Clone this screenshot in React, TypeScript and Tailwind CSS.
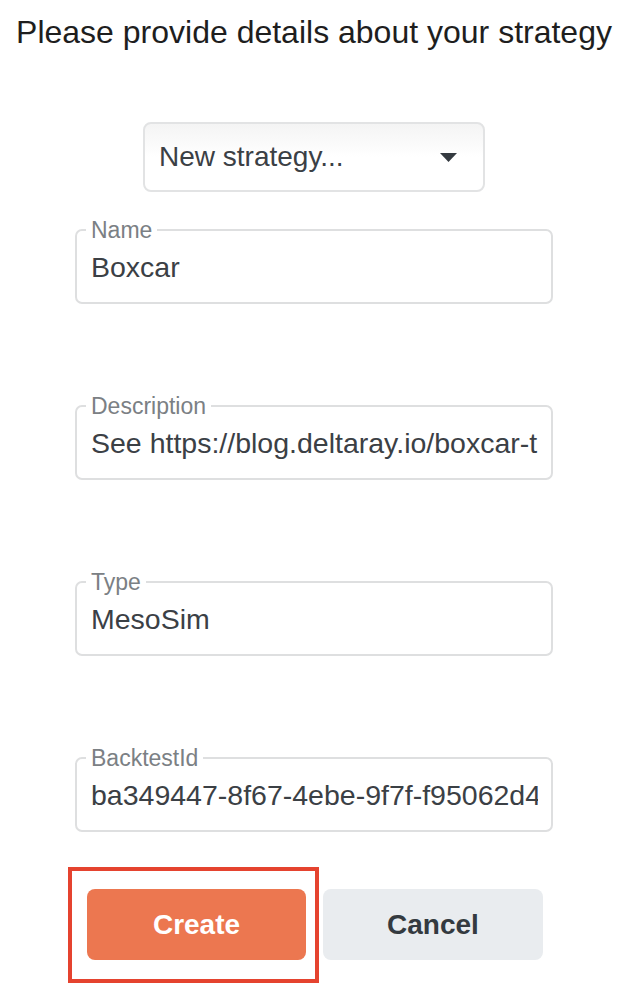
import { useState } from 'react';

type Field = { label: string; value: string };

const fields: Field[] = [
  { label: 'Name', value: 'Boxcar' },
  { label: 'Description', value: 'See https://blog.deltaray.io/boxcar-trading-strategy' },
  { label: 'Type', value: 'MesoSim' },
  { label: 'BacktestId', value: 'ba349447-8f67-4ebe-9f7f-f95062d4a1c3' },
];

function OutlinedField({ label, value, first }: Field & { first?: boolean }) {
  const [text, setText] = useState(value);
  return (
    <fieldset
      className={`w-[478px] rounded-[7px] border-2 border-[#dedfe0] px-[9px] ${first ? 'mt-[25px]' : 'mt-[89px]'}`}
    >
      <legend className="px-[5px] text-[23px] leading-[26px] text-[#7b8084]">{label}</legend>
      <input
        value={text}
        onChange={(e) => setText(e.target.value)}
        className="mt-[7px] mb-[18px] block h-[34px] w-full pl-[5px] pr-[4px] text-[28.5px] leading-[34px] text-[#3b4045] outline-none"
      />
    </fieldset>
  );
}

export default function App() {
  return (
    <div className="w-[628px] bg-white pt-[14px] pb-[40px] font-['Liberation_Sans',Arial,sans-serif]">
      <div className="flex flex-col items-center">
        <h1 className="text-[32px] leading-[36px] whitespace-nowrap text-[#1e1e1e]">
          Please provide details about your strategy
        </h1>

        {/* strategy picker */}
        <button className="mt-[72px] flex h-[70px] w-[342px] items-center justify-between rounded-[8px] border-2 border-[#e2e3e4] bg-gradient-to-b from-[#f4f4f4] via-white to-white pl-[14px] pr-[26px]">
          <span className="text-[28px] text-[#3b4045]">New strategy...</span>
          <svg width="17" height="9" viewBox="0 0 17 9">
            <path d="M0 0h17L8.5 9z" fill="#343a40" />
          </svg>
        </button>

        {fields.map((f, i) => (
          <OutlinedField key={f.label} {...f} first={i === 0} />
        ))}

        <div className="mt-[57px] flex gap-[17px] pl-[2px]">
          <div className="relative">
            <button className="h-[71px] w-[219px] rounded-[8px] bg-[#ec7750] text-[28px] font-bold text-white">
              Create
            </button>
            {/* highlight annotation */}
            <div className="pointer-events-none absolute -top-[22px] -right-[13px] -bottom-[23px] -left-[19px] border-4 border-[#e5432f]" />
          </div>
          <button className="h-[71px] w-[220px] rounded-[8px] bg-[#e9ecef] text-[28px] font-bold text-[#343a40]">
            Cancel
          </button>
        </div>
      </div>
    </div>
  );
}
